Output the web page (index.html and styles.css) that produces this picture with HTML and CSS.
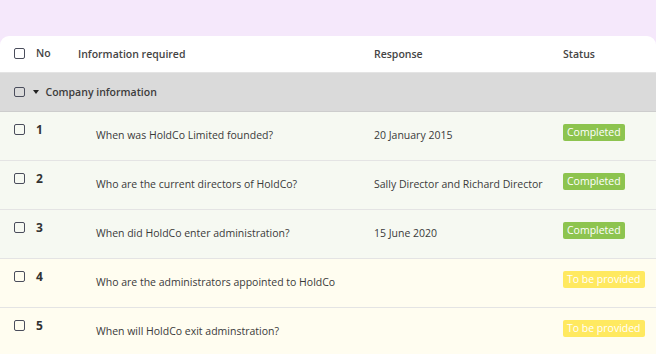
FILE: index.html
```html
<!DOCTYPE html>
<html lang="en">

<head>
    <meta charset="UTF-8">
    <meta name="viewport" content="width=device-width, initial-scale=1.0">
    <title>Information requests</title>
    <link rel="stylesheet" href="styles.css">
</head>

<body>
    <div class="card">
        <div class="head-row">
            <span class="check"></span>
            <span class="col-no">No</span>
            <span class="col-info">Information required</span>
            <span class="col-resp">Response</span>
            <span class="col-status">Status</span>
        </div>

        <div class="group-row">
            <span class="check"></span>
            <span class="caret"></span>
            <span class="group-title">Company information</span>
        </div>

        <div class="row done">
            <span class="check"></span>
            <span class="num">1</span>
            <span class="question">When was HoldCo Limited founded?</span>
            <span class="answer">20 January 2015</span>
            <span class="status"><span class="badge green">Completed</span></span>
        </div>
        <div class="row done">
            <span class="check"></span>
            <span class="num">2</span>
            <span class="question">Who are the current directors of HoldCo?</span>
            <span class="answer">Sally Director and Richard Director</span>
            <span class="status"><span class="badge green">Completed</span></span>
        </div>
        <div class="row done">
            <span class="check"></span>
            <span class="num">3</span>
            <span class="question">When did HoldCo enter administration?</span>
            <span class="answer">15 June 2020</span>
            <span class="status"><span class="badge green">Completed</span></span>
        </div>
        <div class="row pending">
            <span class="check"></span>
            <span class="num">4</span>
            <span class="question">Who are the administrators appointed to HoldCo</span>
            <span class="answer"></span>
            <span class="status"><span class="badge yellow">To be provided</span></span>
        </div>
        <div class="row pending">
            <span class="check"></span>
            <span class="num">5</span>
            <span class="question">When will HoldCo exit adminstration?</span>
            <span class="answer"></span>
            <span class="status"><span class="badge yellow">To be provided</span></span>
        </div>
    </div>
</body>

</html>
```

FILE: styles.css
```css
body {
    font-family: "Open Sans", sans-serif;
    margin: 0;
    padding: 36px 0 0;
    background-color: #f5e8fb;
    color: #3a3a3a;
    font-size: 10.5px;
}

.card {
    background-color: #fff;
    border-radius: 9px 9px 0 0;
    overflow: hidden;
}

.check {
    display: inline-block;
    width: 8.5px;
    height: 8.5px;
    border: 1.5px solid #4a4d5c;
    border-radius: 2px;
    flex-shrink: 0;
}

.head-row {
    display: flex;
    align-items: center;
    height: 36px;
    padding-left: 14px;
    border-bottom: 1px solid #e4e4e4;
    font-weight: 600;
    color: #444;
}

.head-row .check {
    margin-top: -1px;
}

.col-no {
    margin-left: 11.5px;
    width: 42px;
    margin-top: -3px;
}

.col-info {
    width: 296px;
}

.col-resp {
    width: 189px;
}

.group-row {
    display: flex;
    align-items: center;
    height: 38px;
    padding-left: 14px;
    background-color: #dadada;
    border-bottom: 1px solid #cdcdcd;
    font-weight: 600;
    color: #3c3c3c;
}

.caret {
    width: 0;
    height: 0;
    margin-left: 8px;
    border-left: 3px solid transparent;
    border-right: 3px solid transparent;
    border-top: 4px solid #222;
}

.group-title {
    margin-left: 7px;
}

.row {
    display: flex;
    align-items: flex-start;
    height: 49px;
    padding: 12px 0 0 14px;
    box-sizing: border-box;
    border-bottom: 1px solid #e4e4e4;
}

.row.done {
    background-color: #f6f9f2;
}

.row.pending {
    background-color: #fffdf0;
}

.num {
    margin-left: 11.5px;
    width: 60px;
    font-size: 12px;
    font-weight: 700;
    line-height: 12px;
    color: #333;
}

.question {
    width: 278px;
    line-height: 14px;
    margin-top: 4px;
}

.answer {
    width: 189px;
    line-height: 14px;
    margin-top: 4px;
}

.badge {
    display: inline-block;
    height: 17px;
    line-height: 17px;
    padding: 0 4px;
    border-radius: 2px;
    color: #fff;
    font-size: 10.5px;
}

.badge.green {
    background-color: #8dc44f;
}

.badge.yellow {
    background-color: #ffe960;
}
```
